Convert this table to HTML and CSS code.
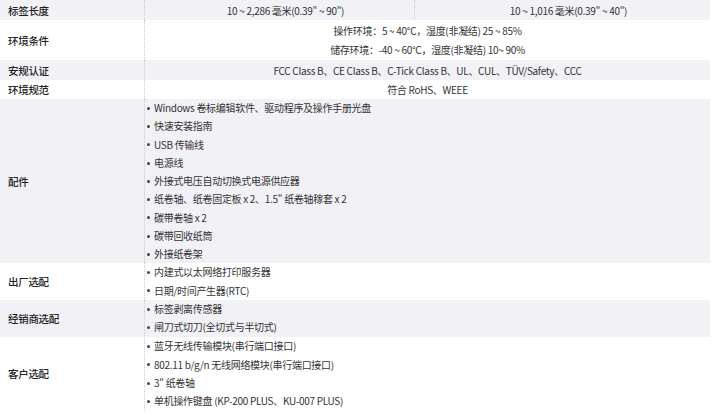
FILE: index.html
```html
<!DOCTYPE html>
<html lang="zh-CN">
<head>
<meta charset="utf-8">
<title>规格</title>
<link rel="stylesheet" href="styles.css">
</head>
<body>
<div class="spec">
  <div class="row shade h20">
    <div class="label">标签长度</div>
    <div class="val split">
      <div class="cell">10 ~ 2,286 毫米(0.39" ~ 90")</div>
      <div class="cell">10 ~ 1,016 毫米(0.39" ~ 40")</div>
    </div>
  </div>
  <div class="row h40">
    <div class="label">环境条件</div>
    <div class="val center two">
      <div>操作环境：5 ~ 40°C，湿度(非凝结) 25 ~ 85%</div>
      <div>储存环境：-40 ~ 60°C，湿度(非凝结) 10~ 90%</div>
    </div>
  </div>
  <div class="row shade h20">
    <div class="label">安规认证</div>
    <div class="val center">FCC Class B、CE Class B、C-Tick Class B、UL、CUL、TÜV/Safety、CCC</div>
  </div>
  <div class="row h19">
    <div class="label">环境规范</div>
    <div class="val center">符合 RoHS、WEEE</div>
  </div>
  <div class="row shade">
    <div class="label">配件</div>
    <ul class="val list">
      <li>Windows 卷标编辑软件、驱动程序及操作手册光盘</li>
      <li>快速安装指南</li>
      <li>USB 传输线</li>
      <li>电源线</li>
      <li>外接式电压自动切换式电源供应器</li>
      <li>纸卷轴、纸卷固定板 x 2、1.5" 纸卷轴稼套 x 2</li>
      <li>碳带卷轴 x 2</li>
      <li>碳带回收纸筒</li>
      <li>外接纸卷架</li>
    </ul>
  </div>
  <div class="row">
    <div class="label">出厂选配</div>
    <ul class="val list">
      <li>内建式以太网络打印服务器</li>
      <li>日期/时间产生器(RTC)</li>
    </ul>
  </div>
  <div class="row shade pad1">
    <div class="label">经销商选配</div>
    <ul class="val list">
      <li>标签剥离传感器</li>
      <li>闸刀式切刀(全切式与半切式)</li>
    </ul>
  </div>
  <div class="row">
    <div class="label">客户选配</div>
    <ul class="val list">
      <li>蓝牙无线传输模块(串行端口接口)</li>
      <li>802.11 b/g/n 无线网络模块(串行端口接口)</li>
      <li>3" 纸卷轴</li>
      <li>单机操作键盘 (KP-200 PLUS、KU-007 PLUS)</li>
    </ul>
  </div>
</div>
</body>
</html>
```

FILE: styles.css
```css
html, body {
  margin: 0;
  padding: 0;
  background: #ffffff;
}

body {
  font-family: "Noto Sans CJK SC", "Noto Sans", sans-serif;
  font-size: 10px;
  letter-spacing: -0.3px;
  color: #333333;
}

.spec {
  width: 710px;
  display: flex;
  flex-direction: column;
}

.row {
  display: grid;
  grid-template-columns: 144px 1fr;
  align-items: stretch;
}

.row.shade {
  background: #f1f1f6;
}

.h20 { min-height: 20px; }
.h40 { min-height: 40px; }
.h19 { min-height: 19px; }
.pad1 { padding-bottom: 1px; }

.label {
  display: flex;
  align-items: center;
  padding-left: 8px;
  font-weight: 500;
  font-size: 10.5px;
  color: #222222;
}

.val {
  border-left: 1px dotted #c9c9cf;
  margin: 0;
}

.center {
  display: flex;
  flex-direction: column;
  align-items: center;
  justify-content: center;
  text-align: center;
  line-height: 19px;
}

.split {
  display: grid;
  grid-template-columns: 270px 1fr;
  border-left: 0;
}

.split .cell {
  border-left: 1px dotted #c9c9cf;
  display: flex;
  align-items: center;
  justify-content: center;
  padding-left: 12px;
}

.list {
  list-style: none;
  padding: 0 0 0 2px;
  line-height: 18.25px;
}

.list li::before {
  content: "";
  display: inline-block;
  width: 3px;
  height: 3px;
  border-radius: 50%;
  background: #444444;
  vertical-align: middle;
  margin: 0 4px 2px 0;
}
```
